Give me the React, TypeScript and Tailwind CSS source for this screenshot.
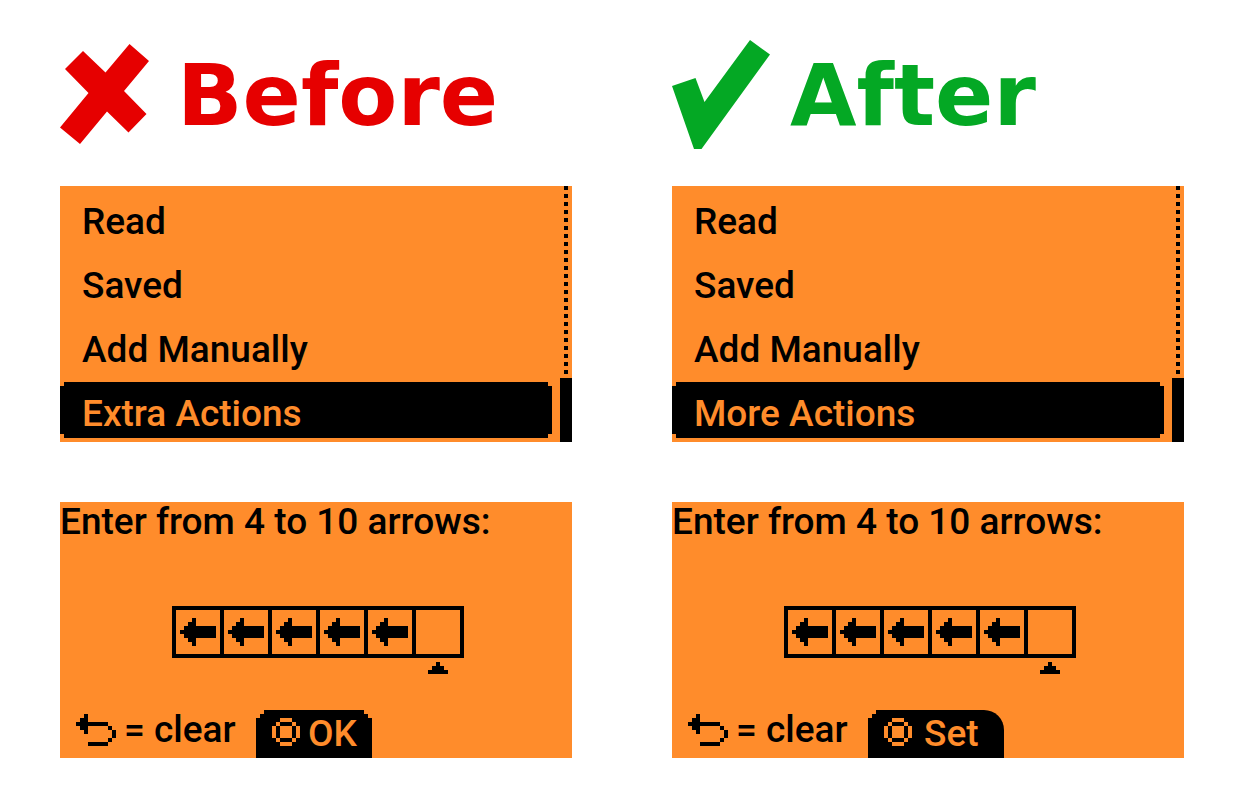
import type { ReactNode } from "react";

const menuItems = ["Read", "Saved", "Add Manually"];

// bitmap icons, one character per display pixel
const arrowIcon = [
  "...#.....",
  "..##.....",
  ".########",
  "#########",
  ".########",
  "..##.....",
  "...#.....",
];

const cursorIcon = ["..#..", ".###.", "#####"];

const backIcon = [
  "..#.......",
  ".##.......",
  "########..",
  ".##.....#.",
  "..#......#",
  ".........#",
  "........#.",
  "...#####..",
];

const okIcon = [
  "..###..",
  ".#...#.",
  "#.###.#",
  "#.###.#",
  "#.###.#",
  ".#...#.",
  "..###..",
];

function PixelIcon({ rows }: { rows: string[] }) {
  const cols = rows[0].length;
  return (
    <svg
      width={cols * 4}
      height={rows.length * 4}
      viewBox={`0 0 ${cols} ${rows.length}`}
      fill="currentColor"
      shapeRendering="crispEdges"
      className="block shrink-0"
      aria-hidden="true"
    >
      {rows.flatMap((row, y) =>
        row.split("").map((c, x) =>
          c === "#" ? <rect key={`${x}-${y}`} x={x} y={y} width="1" height="1" /> : null
        )
      )}
    </svg>
  );
}

function Screen({ children }: { children: ReactNode }) {
  return (
    <div className="h-64 bg-[#ff8c2b] text-black font-['Roboto',sans-serif] text-[37px] font-medium leading-[40px]">
      {children}
    </div>
  );
}

function MenuScreen({ last }: { last: string }) {
  return (
    <Screen>
      <div className="flex h-full">
        <ul className="flex-1 pr-2">
          {menuItems.map((item) => (
            <li key={item}>
              <button type="button" className="flex h-16 w-full items-center pl-[22px] pt-2">
                {item}
              </button>
            </li>
          ))}
          <li className="py-1">
            <button
              type="button"
              className="flex h-14 w-full items-center bg-black pl-[22px] pt-2 text-[#ff8c2b] [clip-path:polygon(4px_0,calc(100%-4px)_0,calc(100%-4px)_4px,100%_4px,100%_calc(100%-4px),calc(100%-4px)_calc(100%-4px),calc(100%-4px)_100%,4px_100%,4px_calc(100%-4px),0_calc(100%-4px),0_4px,4px_4px)]"
            >
              {last}
            </button>
          </li>
        </ul>

        {/* Scrollbar */}
        <div className="flex w-3 flex-col">
          <div className="mx-1 flex-1 bg-[repeating-linear-gradient(to_bottom,#000_0_4px,transparent_4px_8px)]" />
          <div className="h-16 bg-black" />
        </div>
      </div>
    </Screen>
  );
}

function InputScreen({ confirm }: { confirm: string }) {
  return (
    <Screen>
      <div className="flex h-full flex-col justify-between">
        <p className="whitespace-nowrap">Enter from 4 to 10 arrows:</p>

        <div className="flex justify-center pl-1 pt-7">
          <div>
            <div className="flex gap-1 border-4 border-black bg-black">
              {[0, 1, 2, 3, 4, 5].map((i) => (
                <div key={i} className="flex size-11 items-center justify-center bg-[#ff8c2b]">
                  {i < 5 && <PixelIcon rows={arrowIcon} />}
                </div>
              ))}
            </div>
            <div className="flex justify-end pr-4 pt-1">
              <PixelIcon rows={cursorIcon} />
            </div>
          </div>
        </div>

        <div className="flex h-12 pl-4">
          <div className="flex w-[180px] items-center gap-2 pb-2">
            <PixelIcon rows={backIcon} />
            <span className="whitespace-nowrap">= clear</span>
          </div>
          <button
            type="button"
            className={
              confirm === "OK"
                ? "flex w-[116px] items-center gap-2 bg-black pb-1 pl-4 text-[#ff8c2b] [clip-path:polygon(8px_0,calc(100%-8px)_0,calc(100%-8px)_4px,calc(100%-4px)_4px,calc(100%-4px)_8px,100%_8px,100%_100%,0_100%,0_8px,4px_8px,4px_4px,8px_4px)]"
                : "flex w-[136px] items-center gap-3 rounded-tr-[20px] bg-black pb-1 pl-4 text-[#ff8c2b] [clip-path:polygon(8px_0,100%_0,100%_100%,0_100%,0_8px,4px_8px,4px_4px,8px_4px)]"
            }
          >
            <PixelIcon rows={okIcon} />
            <span className="pt-1">{confirm}</span>
          </button>
        </div>
      </div>
    </Screen>
  );
}

export default function App() {
  return (
    <main className="grid grid-cols-2 gap-x-[100px] bg-white px-[60px] py-10">
      <section className="flex flex-col gap-[60px]">
        <div>
          <h2 className="mb-[37px] flex h-[109px] items-center gap-7 font-['DejaVu_Sans',sans-serif] text-[86px] font-bold leading-none text-[#e60000]">
            <svg width="89" height="101" viewBox="0 0 89 101" fill="currentColor" className="shrink-0" aria-hidden="true">
              <path d="M23 7 45.500 28.500 69.500 0 89 17 64 47 86.500 70 68.500 88.500 47 67.500 20 100 0 83.500 28.500 49 5 25Z" />
            </svg>
            Before
          </h2>
          <MenuScreen last="Extra Actions" />
        </div>
        <InputScreen confirm="OK" />
      </section>

      <section className="flex flex-col gap-[60px]">
        <div>
          <h2 className="mb-[37px] flex h-[109px] items-center gap-5 font-['DejaVu_Sans',sans-serif] text-[86px] font-bold leading-none text-[#04a824]">
            <svg width="98" height="109" viewBox="0 0 98 109" fill="currentColor" className="shrink-0" aria-hidden="true">
              <path d="M0 46 23.500 38 32.500 62 78 0 98 14.500 29.500 109H22Z" />
            </svg>
            After
          </h2>
          <MenuScreen last="More Actions" />
        </div>
        <InputScreen confirm="Set" />
      </section>
    </main>
  );
}
